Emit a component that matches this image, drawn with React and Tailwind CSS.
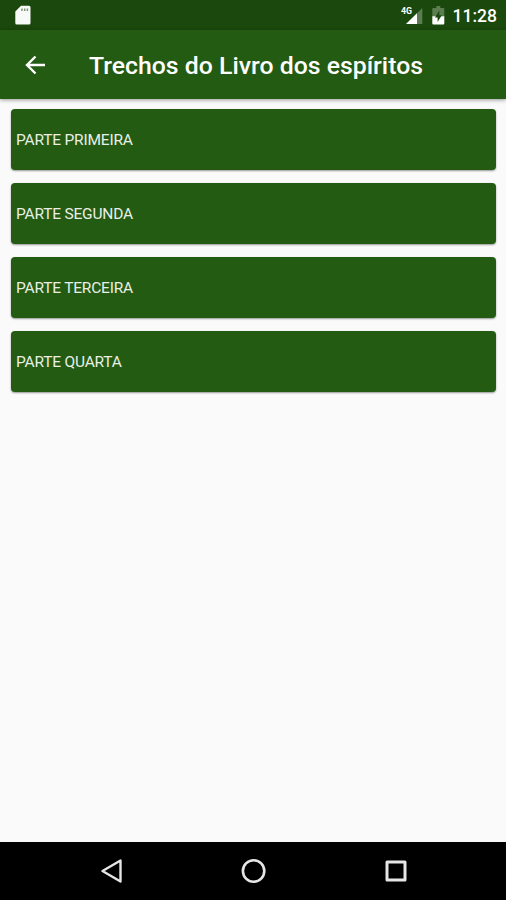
const sections = [
  "PARTE PRIMEIRA",
  "PARTE SEGUNDA",
  "PARTE TERCEIRA",
  "PARTE QUARTA",
];

function StatusBar() {
  return (
    <div className="h-[30px] shrink-0 bg-[#1b480d] flex items-center justify-between pl-[15px] pr-[9px] text-white">
      <svg width="16" height="20" viewBox="0 0 16 20">
        <path d="M6 .8h8a1.500 1.500 0 0 1 1.500 1.500v15.700a1.500 1.500 0 0 1-1.500 1.500H1.800a1.500 1.500 0 0 1-1.500-1.500V6.500z" fill="#f8faf7" />
        <path d="M7 3.500v2.500M9.700 3.500v2.500M12.400 3.500v2.500" stroke="#7d9476" strokeWidth="1.500" />
      </svg>

      <div className="flex items-center">
        <svg width="22" height="20" viewBox="0 0 22 20">
          <path d="M21.300 3v16H5z" fill="#5b7d50" />
          <path d="M16 8.200V19H5z" fill="#fff" />
          <text x="0" y="9" fill="#fff" fontSize="9" fontWeight="700" fontFamily="Roboto, sans-serif" textLength="11" lengthAdjust="spacingAndGlyphs">4G</text>
        </svg>
        <svg className="ml-[9px]" width="13" height="20" viewBox="0 0 13 20">
          <path d="M4.300 1h4v2h3a1 1 0 0 1 1 1v7.500H.3V4a1 1 0 0 1 1-1h3z" fill="#5b7d50" />
          <path d="M.3 11.200h12v7.300a1 1 0 0 1-1 1h-10a1 1 0 0 1-1-1z" fill="#fff" />
          <path d="M7.300 5.500L3 12.500h2.600V17l4.200-6.800H7.300z" fill="#1b480d" />
        </svg>
        <span className="ml-[8px] pt-[4px] text-[17.500px] leading-none font-medium">11:28</span>
      </div>
    </div>
  );
}

function Header() {
  return (
    <header className="h-[69px] shrink-0 bg-[#235b12] flex items-center pl-[25px] text-white shadow-[0_1px_4px_rgba(0,0,0,0.4)]">
      <button aria-label="Voltar">
        <svg width="20" height="20" viewBox="0 0 20 20" fill="none" stroke="#fff" strokeWidth="2.400">
          <path d="M20 10H2.500M10.500 1.500L2 10l8.500 8.500" />
        </svg>
      </button>
      <h1 className="ml-[44px] pt-[2px] text-[24.800px] leading-[30px] font-medium whitespace-nowrap">
        Trechos do Livro dos espíritos
      </h1>
    </header>
  );
}

function NavBar() {
  return (
    <nav className="h-[58px] shrink-0 bg-black flex items-center justify-between pl-[100px] pr-[99px]">
      <svg width="23" height="26" viewBox="0 0 23 26" fill="none" stroke="#e6e6e6" strokeWidth="2.400" strokeLinejoin="round">
        <path d="M20.500 2.500v21L2.500 13z" />
      </svg>
      <svg width="26" height="26" viewBox="0 0 26 26" fill="none" stroke="#e6e6e6" strokeWidth="2.600">
        <circle cx="12.600" cy="13" r="10.700" />
      </svg>
      <svg width="22" height="22" viewBox="0 0 22 22" fill="none" stroke="#e6e6e6" strokeWidth="3" strokeLinejoin="round">
        <path d="M2 2h18v18H2z" />
      </svg>
    </nav>
  );
}

export default function App() {
  return (
    <div className="h-[900px] w-[506px] flex flex-col overflow-hidden bg-[#fafafa] font-[Roboto,sans-serif]">
      <StatusBar />
      <Header />

      <main className="flex-1 flex flex-col gap-[13px] pt-[10px] pl-[11px] pr-[10px]">
        {sections.map((title) => (
          <button
            key={title}
            className="h-[61px] rounded-[4px] bg-[#235b12] pt-[3px] pl-[5px] text-left text-[15.500px] tracking-[-0.200px] text-[#e9efe7] shadow-[0_1px_2px_rgba(0,0,0,0.4)]"
          >
            {title}
          </button>
        ))}
      </main>

      <NavBar />
    </div>
  );
}
